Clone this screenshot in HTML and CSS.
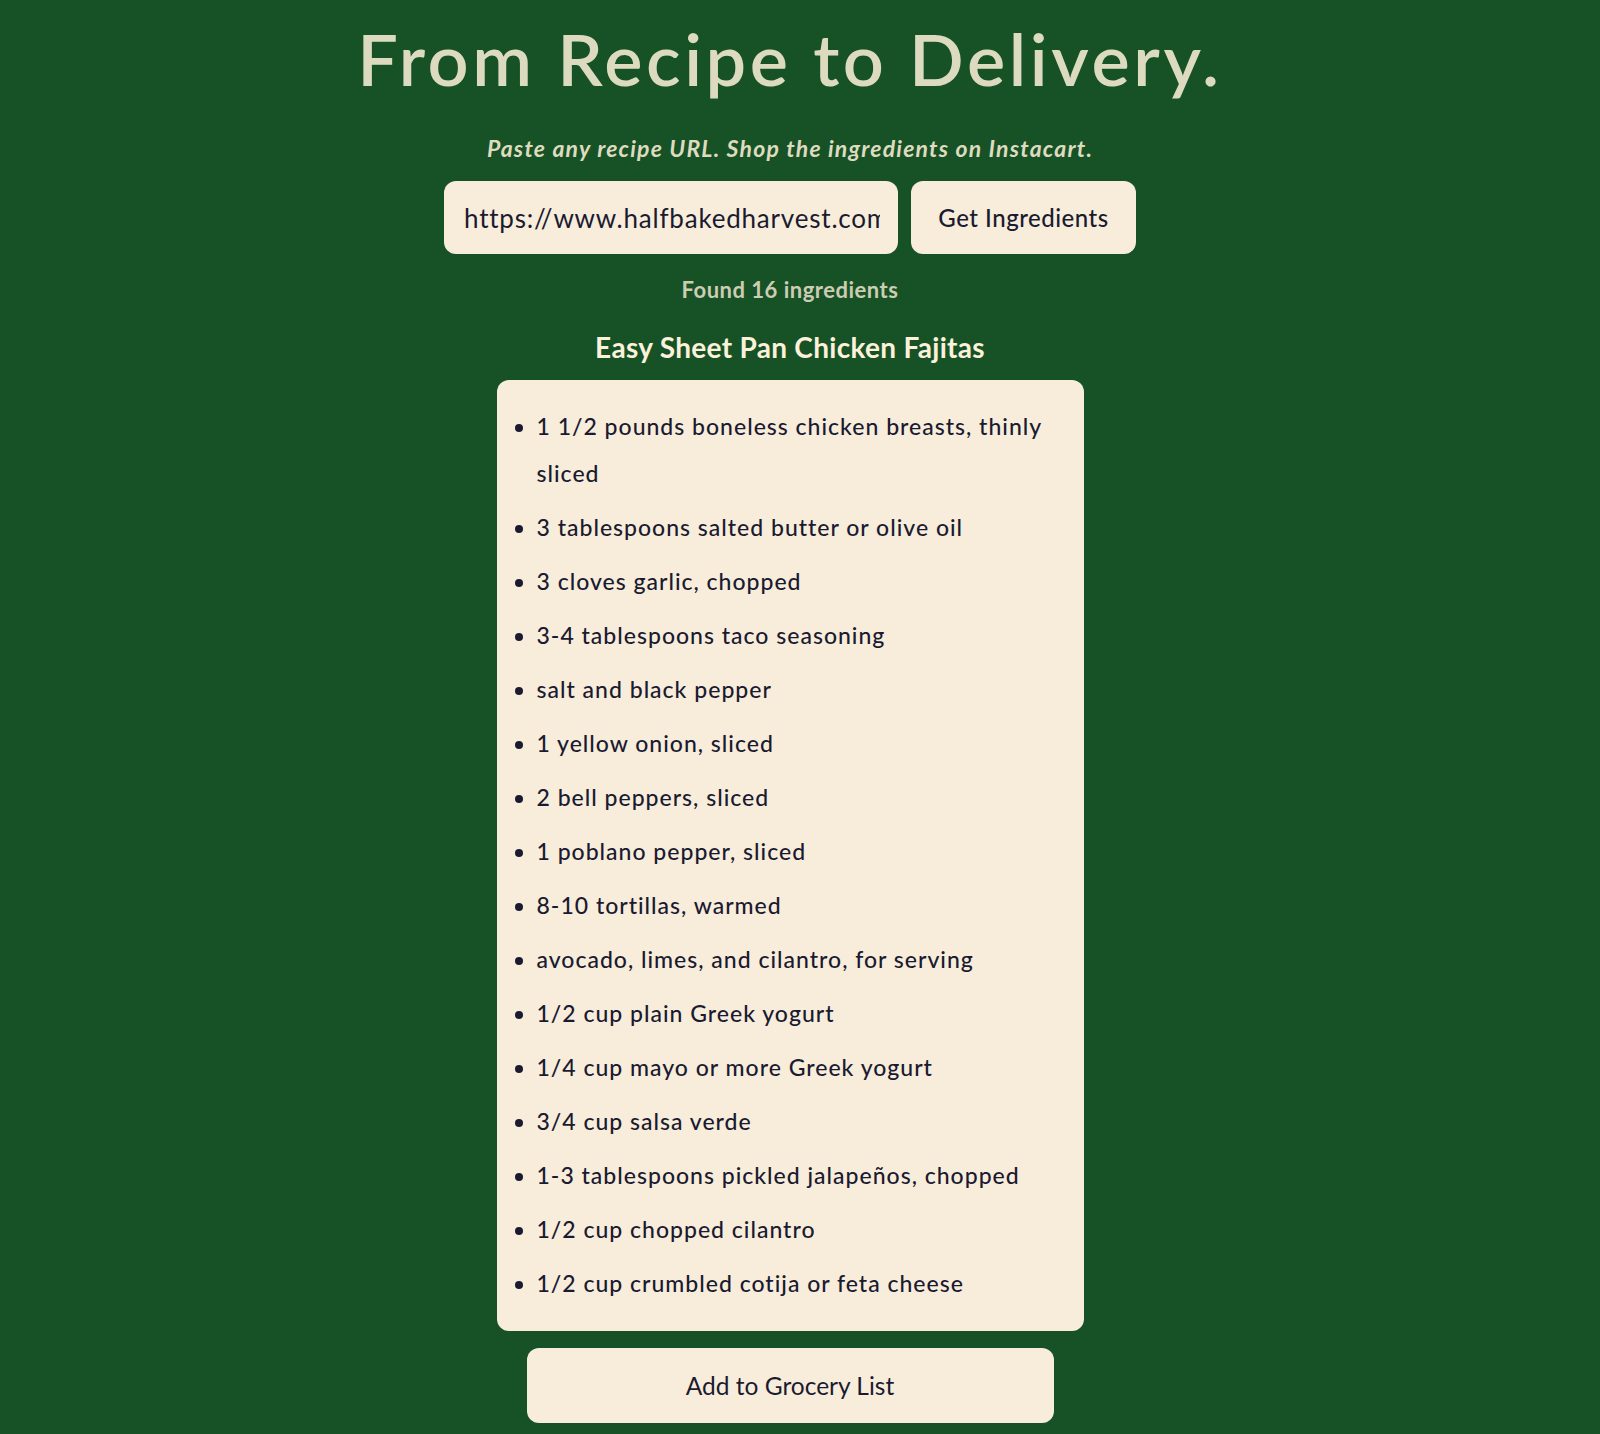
FILE: index.html
```html
<!DOCTYPE html>
<html lang="en">
<head>
<meta charset="utf-8">
<title>From Recipe to Delivery</title>
<link rel="stylesheet" href="styles.css">
</head>
<body>
<main class="page">
  <h1 class="title">From Recipe to Delivery.</h1>
  <p class="tagline">Paste any recipe URL. Shop the ingredients on Instacart.</p>
  <form class="url-form">
    <input class="url-input" type="text" value="https://www.halfbakedharvest.com/sheet-pan-chicken-fajitas/">
    <button class="btn btn-get" type="button">Get Ingredients</button>
  </form>
  <p class="status">Found 16 ingredients</p>
  <h2 class="recipe-name">Easy Sheet Pan Chicken Fajitas</h2>
  <section class="card">
    <ul class="ingredients">
      <li>1 1/2 pounds boneless chicken breasts, thinly sliced</li>
      <li>3 tablespoons salted butter or olive oil</li>
      <li>3 cloves garlic, chopped</li>
      <li>3-4 tablespoons taco seasoning</li>
      <li>salt and black pepper</li>
      <li>1 yellow onion, sliced</li>
      <li>2 bell peppers, sliced</li>
      <li>1 poblano pepper, sliced</li>
      <li>8-10 tortillas, warmed</li>
      <li>avocado, limes, and cilantro, for serving</li>
      <li>1/2 cup plain Greek yogurt</li>
      <li>1/4 cup mayo or more Greek yogurt</li>
      <li>3/4 cup salsa verde</li>
      <li>1-3 tablespoons pickled jalapeños, chopped</li>
      <li>1/2 cup chopped cilantro</li>
      <li>1/2 cup crumbled cotija or feta cheese</li>
    </ul>
  </section>
  <button class="btn btn-add" type="button">Add to Grocery List</button>
</main>
</body>
</html>
```

FILE: styles.css
```css
html, body {
  margin: 0;
  padding: 0;
  background: #175227;
}

body {
  font-family: Lato, "Noto Sans", sans-serif;
  color: #1b1b30;
}

.page {
  width: 1580px;
  display: flex;
  flex-direction: column;
  align-items: center;
  padding-bottom: 11px;
}

.title {
  margin: 16px 0 0;
  font-size: 72px;
  line-height: 84px;
  font-weight: 600;
  color: #dcdbc0;
  letter-spacing: 3.6px;
}

.tagline {
  margin: 34px 0 0;
  font-size: 23px;
  line-height: 28px;
  font-style: italic;
  font-weight: 700;
  color: #dedbbf;
  letter-spacing: 1.2px;
}

.url-form {
  margin: 19px 0 0;
  display: flex;
  gap: 13px;
}

.url-input {
  box-sizing: border-box;
  width: 454px;
  height: 73px;
  border: none;
  border-radius: 12px;
  background: #f8eddb;
  padding: 0 18px 0 20px;
  font-family: Lato, "Noto Sans", sans-serif;
  font-size: 26px;
  letter-spacing: 0.8px;
  color: #1b1b30;
  outline: none;
}

.btn {
  border: none;
  border-radius: 12px;
  background: #f8eddb;
  font-family: Lato, "Noto Sans", sans-serif;
  color: #1b1b30;
  cursor: pointer;
}

.btn-get {
  box-sizing: border-box;
  width: 225px;
  height: 73px;
  font-size: 24px;
  font-weight: 500;
  letter-spacing: 0.5px;
  padding: 0;
}

.status {
  margin: 23px 0 0;
  font-size: 22px;
  line-height: 26px;
  font-weight: 700;
  color: #cdcdb3;
  letter-spacing: 0.5px;
}

.recipe-name {
  margin: 27px 0 0;
  font-size: 28px;
  line-height: 34px;
  font-weight: 700;
  color: #fcf1da;
  letter-spacing: 0.3px;
}

.card {
  box-sizing: border-box;
  width: 587px;
  margin-top: 16px;
  padding: 23px 20px 24px 0;
  background: #f8eddb;
  border-radius: 12px;
}

.ingredients {
  margin: 0;
  padding-left: 40px;
  display: flex;
  flex-direction: column;
  gap: 7px;
  font-size: 23px;
  line-height: 47px;
  font-weight: 500;
  letter-spacing: 1px;
  color: #1a1a30;
}

.btn-add {
  box-sizing: border-box;
  width: 527px;
  height: 75px;
  margin-top: 17px;
  font-size: 24.5px;
  font-weight: 400;
}
```
